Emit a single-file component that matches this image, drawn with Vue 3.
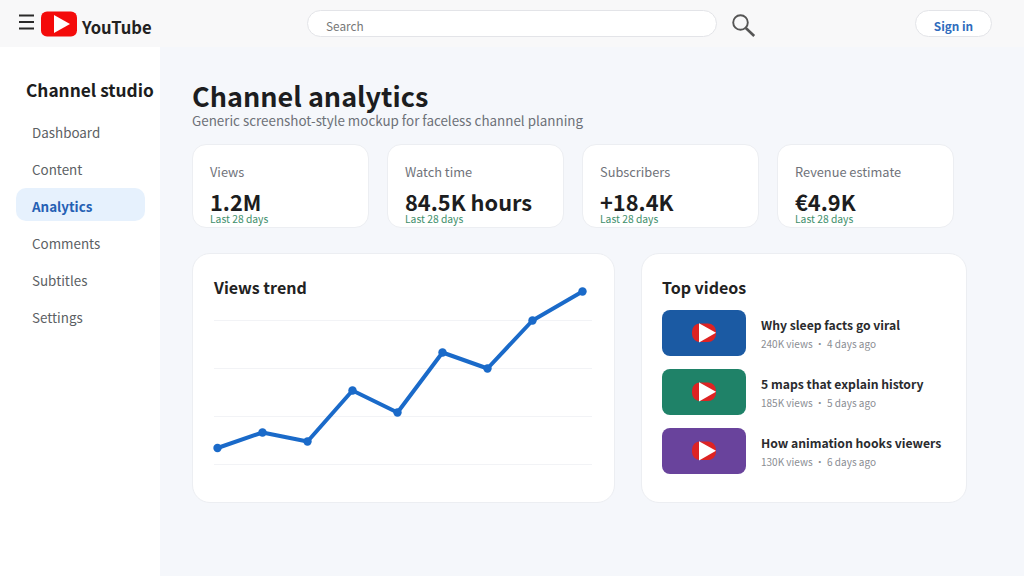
<template>
  <div class="page">
    <!-- Top bar -->
    <header class="topbar">
      <div class="brand">
        <svg class="burger" width="16" height="16" viewBox="0 0 16 16">
          <path d="M0 1.5h15M0 8h15M0 14.5h15" stroke="#2a2a2a" stroke-width="2" fill="none" />
        </svg>
        <svg class="logo" width="36" height="26" viewBox="0 0 36 26">
          <rect width="36" height="25" y="0.5" rx="6" fill="#f40b0b" />
          <path d="M13 4L29 13L13 22Z" fill="#fff" />
        </svg>
        <span class="brand-name">YouTube</span>
      </div>
      <div class="search">
        <div class="search-box">Search</div>
        <svg class="search-icon" width="26" height="26" viewBox="0 0 26 26">
          <circle cx="9.5" cy="10.5" r="7.3" stroke="#555" stroke-width="1.9" fill="none" />
          <path d="M14.8 16l8.4 8" stroke="#555" stroke-width="2.6" fill="none" />
        </svg>
      </div>
      <button class="signin">Sign in</button>
    </header>

    <div class="body">
      <!-- Sidebar -->
      <aside class="sidebar">
        <h2 class="side-title">Channel studio</h2>
        <nav class="nav">
          <div
            v-for="item in navItems"
            :key="item"
            class="nav-item"
            :class="{ active: item === 'Analytics' }"
          >
            {{ item }}
          </div>
        </nav>
      </aside>

      <!-- Main -->
      <main class="main">
        <h1 class="title">Channel analytics</h1>
        <p class="subtitle">Generic screenshot-style mockup for faceless channel planning</p>

        <div class="stats">
          <div v-for="s in stats" :key="s.label" class="stat">
            <div class="stat-label">{{ s.label }}</div>
            <div class="stat-value">{{ s.value }}</div>
            <div class="stat-note">Last 28 days</div>
          </div>
        </div>

        <div class="panels">
          <section class="panel trend">
            <h3 class="panel-title">Views trend</h3>
            <svg class="chart" width="380" height="170" viewBox="0 0 380 170">
              <line
                v-for="y in gridLines"
                :key="y"
                x1="0"
                x2="378"
                :y1="y"
                :y2="y"
                stroke="#f2f3f6"
              />
              <polyline :points="linePoints" fill="none" stroke="#1a6ac9" stroke-width="4" stroke-linejoin="round" />
              <circle v-for="p in points" :key="p[0]" :cx="p[0]" :cy="p[1]" r="4.2" fill="#1a6ac9" />
            </svg>
          </section>

          <section class="panel top">
            <h3 class="panel-title">Top videos</h3>
            <div class="videos">
              <div v-for="v in videos" :key="v.title" class="video">
                <div class="thumb" :style="{ background: v.color }">
                  <svg width="28" height="20" viewBox="0 0 28 20">
                    <rect x="2" y="0.5" width="24" height="18.5" rx="8" fill="#dd2323" />
                    <path d="M9 0.2L26 9.8L9 19.4Z" fill="#fff" />
                  </svg>
                </div>
                <div class="video-info">
                  <div class="video-title">{{ v.title }}</div>
                  <div class="video-meta">{{ v.meta }}</div>
                </div>
              </div>
            </div>
          </section>
        </div>
      </main>
    </div>
  </div>
</template>

<script setup>
const navItems = ["Dashboard", "Content", "Analytics", "Comments", "Subtitles", "Settings"]

const stats = [
  { label: "Views", value: "1.2M" },
  { label: "Watch time", value: "84.5K hours" },
  { label: "Subscribers", value: "+18.4K" },
  { label: "Revenue estimate", value: "€4.9K" }
]

const videos = [
  { title: "Why sleep facts go viral", meta: "240K views · 4 days ago", color: "#1b5aa3" },
  { title: "5 maps that explain history", meta: "185K views · 5 days ago", color: "#1f8268" },
  { title: "How animation hooks viewers", meta: "130K views · 6 days ago", color: "#69439c" }
]

// chart coords, origin at the svg's top left
const points = [
  [3.5, 147], [48.5, 131.5], [93.5, 140.5], [138.5, 89.5], [183.5, 111.5],
  [228.5, 51.5], [273.5, 67.5], [318.5, 19.5], [368.5, -9.5]
]
const linePoints = points.map((p) => p.join(",")).join(" ")
const gridLines = [19.5, 67.5, 115.5, 163.5]
</script>

<style>
html, body {
  margin: 0;
  background: #f5f7fb;
}
</style>

<style scoped>
.page {
  width: 1024px;
  height: 576px;
  overflow: hidden;
  display: flex;
  flex-direction: column;
  font-family: "Noto Sans CJK SC", "Noto Sans", sans-serif;
  color: #1c1d20;
}

.topbar {
  height: 47px;
  flex: none;
  display: flex;
  align-items: center;
  background: #f8f8f9;
}

.brand {
  width: 307px;
  display: flex;
  align-items: center;
  padding-left: 19px;
  box-sizing: border-box;
}

.burger { margin-right: 6px; margin-top: -3px; }
.logo { margin-top: 1px; }

.brand-name {
  font-size: 16.6px;
  font-weight: 700;
  color: #222;
  margin-left: 5px;
  margin-top: 7px;
}

.search {
  width: 608px;
  display: flex;
  align-items: center;
}

.search-box {
  width: 410px;
  height: 27px;
  box-sizing: border-box;
  border: 1px solid #e3e4e8;
  border-radius: 14px;
  background: #fff;
  padding-left: 18px;
  font-size: 11.8px;
  line-height: 29px;
  color: #777;
}

.search-icon { margin-left: 14px; margin-top: 2px; }

.signin {
  width: 77px;
  height: 27px;
  padding: 4px 0 0;
  border: 1px solid #e3e4e8;
  border-radius: 14px;
  background: #fff;
  font-family: inherit;
  font-size: 11.8px;
  font-weight: 700;
  color: #2f6cbd;
}

.body {
  flex: 1;
  display: flex;
  min-height: 0;
}

.sidebar {
  width: 160px;
  flex: none;
  background: #fff;
  box-sizing: border-box;
  padding: 29px 0 0 16px;
}

.side-title {
  margin: 0 0 10px 10px;
  font-size: 17.3px;
  line-height: 28px;
  font-weight: 700;
  white-space: nowrap;
}

.nav {
  width: 129px;
  display: flex;
  flex-direction: column;
  gap: 4px;
}

.nav-item {
  height: 33px;
  line-height: 37px;
  padding-left: 16px;
  border-radius: 10px;
  font-size: 13.4px;
  color: #5c5f64;
}

.nav-item.active {
  background: #e6f1fd;
  color: #2560b4;
  font-weight: 700;
}

.main {
  flex: 1;
  background: #f5f7fb;
  padding: 31px 0 0 32px;
}

.title {
  margin: 0;
  font-size: 27px;
  line-height: 36px;
  font-weight: 700;
}

.subtitle {
  margin: -4px 0 0;
  font-size: 13.4px;
  line-height: 20px;
  color: #6d7178;
}

.stats {
  display: flex;
  gap: 18px;
  margin-top: 14px;
}

.stat {
  width: 177px;
  height: 84px;
  box-sizing: border-box;
  background: #fff;
  border: 1px solid #eceef2;
  border-radius: 14px;
  padding: 17px 0 0 17px;
}

.stat-label {
  font-size: 12.8px;
  line-height: 20px;
  color: #70737a;
}

.stat-value {
  margin-top: 9px;
  font-size: 21.8px;
  line-height: 22px;
  font-weight: 700;
}

.stat-note {
  font-size: 10.3px;
  line-height: 12px;
  color: #3f8f6c;
}

.panels {
  display: flex;
  gap: 26px;
  margin-top: 25px;
}

.panel {
  height: 250px;
  box-sizing: border-box;
  background: #fff;
  border: 1px solid #eceef2;
  border-radius: 18px;
}

.trend {
  width: 423px;
  padding: 20px 0 0 21px;
}

.top {
  width: 326px;
  padding: 20px 0 0 20px;
}

.panel-title {
  margin: 0;
  font-size: 16px;
  line-height: 26px;
  font-weight: 700;
  color: #222;
}

.chart {
  display: block;
  margin-top: 1px;
  overflow: visible;
}

.videos {
  margin-top: 10px;
  display: flex;
  flex-direction: column;
  gap: 13px;
}

.video {
  display: flex;
  align-items: center;
  gap: 15px;
}

.thumb {
  width: 84px;
  height: 46px;
  border-radius: 8px;
  display: flex;
  align-items: center;
  justify-content: center;
}

.video-info {
  padding-top: 2px;
}

.video-title {
  font-size: 12.2px;
  line-height: 18px;
  font-weight: 700;
  color: #2a2b2e;
  white-space: nowrap;
}

.video-meta {
  margin-top: 2px;
  font-size: 10px;
  line-height: 16px;
  color: #8a8d93;
  white-space: nowrap;
}
</style>
